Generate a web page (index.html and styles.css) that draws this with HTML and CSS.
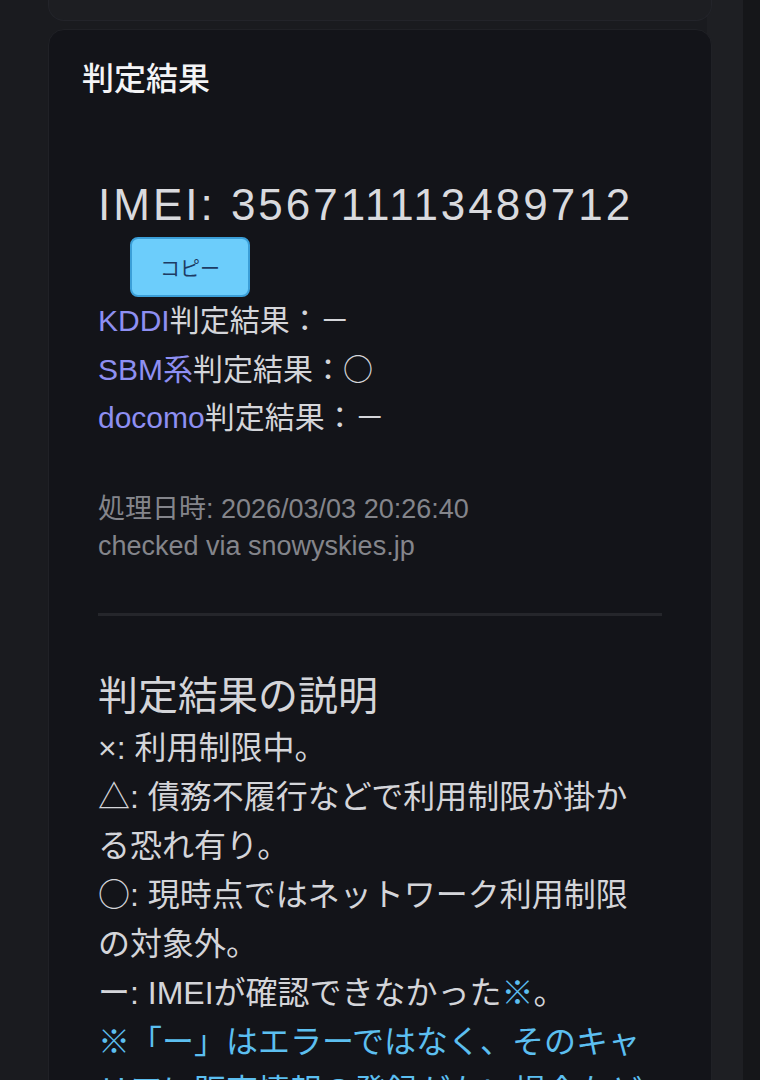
FILE: index.html
```html
<!DOCTYPE html>
<html lang="ja">
<head>
  <meta charset="utf-8">
  <title>判定結果</title>
  <link rel="stylesheet" href="styles.css">
</head>
<body>
  <div class="page">
    <!-- End of the card above -->
    <div class="prev-card"></div>

    <!-- Result card -->
    <section class="card">
      <h2 class="card-title">判定結果</h2>

      <div class="result">
        <div class="imei">IMEI: 356711113489712</div>
        <button class="copy-button" onclick="copyImei()">コピー</button>

        <div class="carrier"><span class="carrier-name">KDDI</span>判定結果：－</div>
        <div class="carrier"><span class="carrier-name">SBM系</span>判定結果：<span class="mark">○</span></div>
        <div class="carrier"><span class="carrier-name">docomo</span>判定結果：－</div>

        <div class="meta">
          処理日時: 2026/03/03 20:26:40<br>
          checked via snowyskies.jp
        </div>

        <hr class="divider">

        <h3 class="legend-title">判定結果の説明</h3>
        <p class="legend">
          ×: 利用制限中。<br>
          <span class="mark">△</span>: 債務不履行などで利用制限が掛かる恐れ有り。<br>
          <span class="mark">○</span>: 現時点ではネットワーク利用制限の対象外。<br>
          ー: IMEIが確認できなかった<span class="note">※</span>。<br>
          <span class="note">※「ー」はエラーではなく、そのキャリアに販売情報の登録がない場合などに表示されます。</span>
        </p>
      </div>
    </section>
  </div>

  <script>
    function copyImei() {
      var imei = "356711113489712";
      if (navigator.clipboard) {
        navigator.clipboard.writeText(imei);
      }
    }
  </script>
</body>
</html>
```

FILE: styles.css
```css
body {
  margin: 0;
  padding: 0;
  font-family: "Liberation Sans", "Noto Sans CJK JP", sans-serif;
  /* dark page with a lighter strip on the right */
  background: linear-gradient(to right, #1a1b1f 0, #1a1b1f 707px, #1e1f23 707px, #1e1f23 743px, #151619 743px);
  color: #d4d5d9;
  height: 1080px;
  overflow: hidden;
}

.page {
  padding-left: 48px;
  width: 664px;
}

.prev-card {
  height: 20px;
  margin-bottom: 8px;
  background-color: #1d1e22;
  border: 1px solid #23242a;
  border-top: none;
  border-radius: 0 0 16px 16px;
}

.card {
  background-color: #131419;
  border: 1px solid #202126;
  border-radius: 16px;
  padding: 25px 50px 0 33px;
  height: 1100px;
}

.card-title {
  margin: 0;
  font-size: 32px;
  line-height: 48px;
  font-weight: 500;
  color: #f4f4f6;
}

.result {
  padding-left: 16px;
  width: 564px;
}

.imei {
  margin-top: 74px;
  font-size: 44px;
  line-height: 56px;
  letter-spacing: 3px;
  color: #d9dade;
}

.copy-button {
  display: block;
  margin: 4px 0 0 32px;
  width: 120px;
  height: 60px;
  background-color: #6ccdfb;
  border: 2px solid #3b9fd8;
  border-radius: 8px;
  color: #1d3b63;
  font-family: "Noto Sans CJK JP", sans-serif;
  font-size: 20px;
  cursor: pointer;
}

.carrier {
  font-size: 30px;
  line-height: 48.5px;
  color: #d4d5d9;
}

.carrier-name {
  color: #8e8ff2;
}

/* full-width marks from the CJK font, without growing the line */
.mark {
  font-family: "Noto Sans CJK JP", sans-serif;
  line-height: 1;
}

.meta {
  margin-top: 48px;
  font-size: 27px;
  line-height: 37px;
  color: #84858b;
}

.divider {
  margin: 48px 0 0 0;
  border: none;
  height: 3px;
  background-color: #25262b;
}

.legend-title {
  margin: 52px 0 0 0;
  font-size: 40px;
  line-height: 56px;
  font-weight: normal;
  color: #d4d5d9;
}

.legend {
  margin: 0;
  width: 556px;
  font-size: 32px;
  line-height: 49px;
  color: #d4d5d9;
}

.note {
  color: #5cbff0;
}
```
